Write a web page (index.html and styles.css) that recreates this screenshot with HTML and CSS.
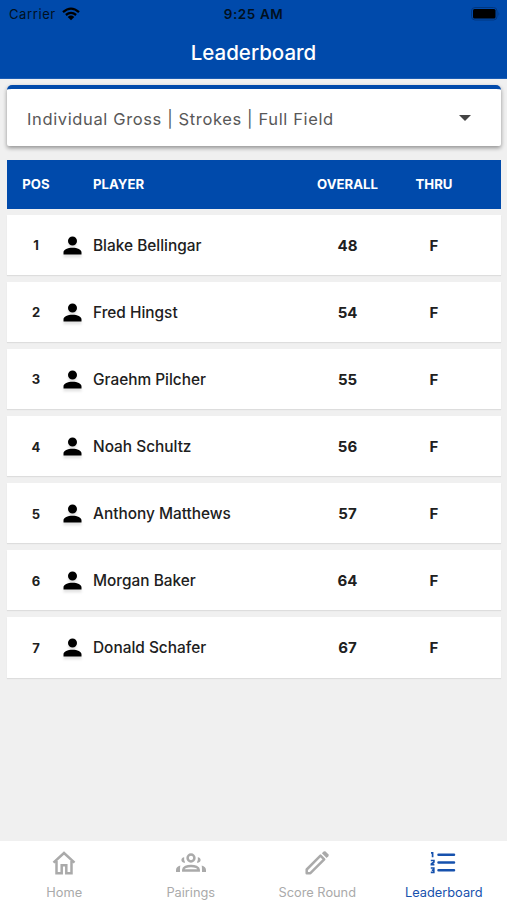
FILE: index.html
```html
<!DOCTYPE html>
<html lang="en">

<head>
    <meta charset="UTF-8">
    <meta name="viewport" content="width=device-width, initial-scale=1.0">
    <title>Leaderboard</title>
    <link rel="stylesheet" href="styles.css">
</head>

<body>
    <svg class="sprite" width="0" height="0">
        <symbol id="person" viewBox="0 0 24 24">
            <path d="M12 4a4 4 0 1 1 0 8 4 4 0 0 1 0-8zm0 10c4.400 0 8 1.800 8 4v2H4v-2c0-2.200 3.600-4 8-4z"/>
        </symbol>
    </svg>

    <header class="header">
        <div class="status-bar">
            <div class="carrier">
                <span>Carrier</span>
                <svg class="wifi" viewBox="0 0 18 14">
                    <path d="M1 5.200Q9-1.900 17 5.200M3.900 8Q9 3.700 14.100 8" fill="none" stroke="#000" stroke-width="2.300"/>
                    <path d="M5.700 9.900Q9 7.300 12.300 9.900L9 13.300z"/>
                </svg>
            </div>
            <span class="time">9:25 AM</span>
            <svg class="battery" viewBox="0 0 29 14">
                <rect x=".5" y=".5" width="25.500" height="12.500" rx="3.500" fill="none" stroke="#003780"/>
                <rect x="2" y="2" width="22.500" height="9.500" rx="1.500"/>
                <path d="M27.500 4.500q1.500 2.300 0 4.500z" fill="#003780"/>
            </svg>
        </div>
        <h1>Leaderboard</h1>
    </header>

    <main class="content">
        <div class="select">
            <span>Individual Gross | Strokes | Full Field</span>
            <svg class="arrow" viewBox="0 0 12 6"><path d="M0 0h12L6 6z"/></svg>
        </div>

        <div class="row row-head">
            <span>POS</span>
            <span class="player">PLAYER</span>
            <span>OVERALL</span>
            <span>THRU</span>
        </div>
        <div class="row">
            <span class="pos">1</span>
            <svg class="avatar"><use href="#person"/></svg>
            <span class="player">Blake Bellingar</span>
            <span class="score">48</span>
            <span class="score">F</span>
        </div>
        <div class="row">
            <span class="pos">2</span>
            <svg class="avatar"><use href="#person"/></svg>
            <span class="player">Fred Hingst</span>
            <span class="score">54</span>
            <span class="score">F</span>
        </div>
        <div class="row">
            <span class="pos">3</span>
            <svg class="avatar"><use href="#person"/></svg>
            <span class="player">Graehm Pilcher</span>
            <span class="score">55</span>
            <span class="score">F</span>
        </div>
        <div class="row">
            <span class="pos">4</span>
            <svg class="avatar"><use href="#person"/></svg>
            <span class="player">Noah Schultz</span>
            <span class="score">56</span>
            <span class="score">F</span>
        </div>
        <div class="row">
            <span class="pos">5</span>
            <svg class="avatar"><use href="#person"/></svg>
            <span class="player">Anthony Matthews</span>
            <span class="score">57</span>
            <span class="score">F</span>
        </div>
        <div class="row">
            <span class="pos">6</span>
            <svg class="avatar"><use href="#person"/></svg>
            <span class="player">Morgan Baker</span>
            <span class="score">64</span>
            <span class="score">F</span>
        </div>
        <div class="row">
            <span class="pos">7</span>
            <svg class="avatar"><use href="#person"/></svg>
            <span class="player">Donald Schafer</span>
            <span class="score">67</span>
            <span class="score">F</span>
        </div>
    </main>

    <nav class="tabs">
        <a class="tab">
            <svg viewBox="0 0 32 28">
                <path d="M5.500 14.700L16 5l10.500 9.700M8.500 13v12.200h5.200v-8h4.600v8h5.200V13" fill="none" stroke="currentColor" stroke-width="2.500"/>
            </svg>
            <span>Home</span>
        </a>
        <a class="tab">
            <svg viewBox="0 0 32 28">
                <g fill="none" stroke="currentColor" stroke-width="2.500">
                    <circle cx="16" cy="10" r="3.400"/>
                    <path d="M8.300 22.600v-.8c0-2.300 3.800-3.900 7.700-3.900s7.700 1.600 7.700 3.900v.8z"/>
                </g>
                <path fill="currentColor" d="M9.200 9.300a2.700 2.700 0 1 0 .9 5.200 7.500 7.500 0 0 1-.9-5.200zM22.800 9.300a2.700 2.700 0 1 1-.9 5.200 7.500 7.500 0 0 0 .9-5.200zM5.300 17.600C2.500 18.500 1 20.100 1 22v1.900h4v-2c0-1.600.1-3 .3-4.300zM26.700 17.600c2.800.9 4.300 2.500 4.300 4.400v1.900h-4v-2c0-1.600-.1-3-.3-4.300z"/>
            </svg>
            <span>Pairings</span>
        </a>
        <a class="tab">
            <svg viewBox="0 0 32 28">
                <path d="M5.700 21.500L19.500 7.700l3.700 3.700L9.400 25.200H5.700z" fill="none" stroke="currentColor" stroke-width="2.500" stroke-linejoin="round"/>
                <path d="M20.900 5.300l1.700-1.700q1-.9 2 0l2.700 2.700q.9 1 0 2l-1.700 1.700z" fill="currentColor"/>
            </svg>
            <span>Score Round</span>
        </a>
        <a class="tab active">
            <svg viewBox="0 0 32 28">
                <path d="M10.500 6.800h15.500M10.500 14.500h15.500M10.500 22.200h15.500" fill="none" stroke="currentColor" stroke-width="2.500" stroke-linecap="round"/>
                <path d="M3 4.800h1.600v4.500M2.800 12.500h3.100v1.500l-2.500 2v.6h3M2.800 20h3v4.400h-3M3.800 22.200h2" fill="none" stroke="currentColor" stroke-width="1.700"/>
            </svg>
            <span>Leaderboard</span>
        </a>
    </nav>
</body>

</html>
```
FILE: styles.css
```css
* {
    box-sizing: border-box;
}

body {
    margin: 0;
    height: 900px;
    display: flex;
    flex-direction: column;
    overflow: hidden;
    background: #f0f0f0;
    color: #202020;
    font-family: Inter, "Liberation Sans", sans-serif;
}

.sprite {
    position: absolute;
}

.header {
    height: 79px;
    flex: none;
    background: #004aab;
    border-bottom: 1px solid #1c5db4;
}

.status-bar {
    display: grid;
    grid-template-columns: 1fr auto 1fr;
    align-items: center;
    height: 27px;
    padding: 0 7px 0 9px;
    color: #001020;
    font-size: 13px;
}

.carrier {
    display: flex;
    align-items: center;
    gap: 6px;
    letter-spacing: 0.6px;
}

.wifi {
    width: 18px;
    height: 14px;
}

.time {
    margin-right: 2px;
    font-size: 13.5px;
    font-weight: 600;
    letter-spacing: 0.6px;
}

.battery {
    width: 29px;
    height: 14px;
    justify-self: end;
}

h1 {
    margin: 0;
    color: #fff;
    font-size: 20.5px;
    font-weight: 500;
    line-height: 51px;
    text-align: center;
}

.content {
    flex: 1;
    padding: 6px 6.5px 0 7px;
}

.select {
    display: flex;
    align-items: center;
    justify-content: space-between;
    height: 61px;
    margin-bottom: 13.500px;
    padding: 2px 29.5px 0 20px;
    background: #fff;
    border-top: 4px solid #004aab;
    border-radius: 5px 5px 2px 2px;
    box-shadow: 0 2px 4px rgba(0, 0, 0, 0.4);
    color: #585858;
    font-size: 16.5px;
    letter-spacing: 0.63px;
}

.arrow {
    width: 12px;
    height: 6px;
    margin-bottom: 2px;
    fill: #444;
}

.row {
    display: grid;
    grid-template-columns: 52px 34px 211px 87px 86px;
    align-items: center;
    height: 60.500px;
    margin-bottom: 6.600px;
    padding-top: 1px;
    background: #fff;
    box-shadow: 0 1px 1px rgba(0, 0, 0, 0.08);
    text-align: center;
}

.row-head {
    height: 49px;
    margin-bottom: 6px;
    padding-top: 0;
    background: #004aab;
    box-shadow: none;
    color: #fff;
    font-size: 13.2px;
    font-weight: 700;
}

.row > :first-child {
    padding-left: 6px;
}

.player {
    grid-column: 3;
    text-align: left;
}

.row:not(.row-head) .player {
    font-size: 15.4px;
    font-weight: 500;
}

.pos {
    font-size: 13px;
    font-weight: 700;
}

.score {
    font-size: 15px;
    font-weight: 700;
}

.avatar {
    width: 27px;
    height: 27px;
    fill: #000;
    filter: drop-shadow(0 3px 1px rgba(0, 0, 0, 0.1));
}

.tabs {
    display: grid;
    grid-template-columns: repeat(4, 1fr);
    flex: none;
    height: 59px;
    padding-left: 1px;
    background: #fff;
}

.tab {
    display: flex;
    flex-direction: column;
    align-items: center;
    padding-top: 7px;
    color: #aaa;
    font-size: 12.8px;
}

.tab svg {
    width: 32px;
    height: 28px;
    margin-bottom: 9px;
}

.active {
    color: #1651ad;
}
```
